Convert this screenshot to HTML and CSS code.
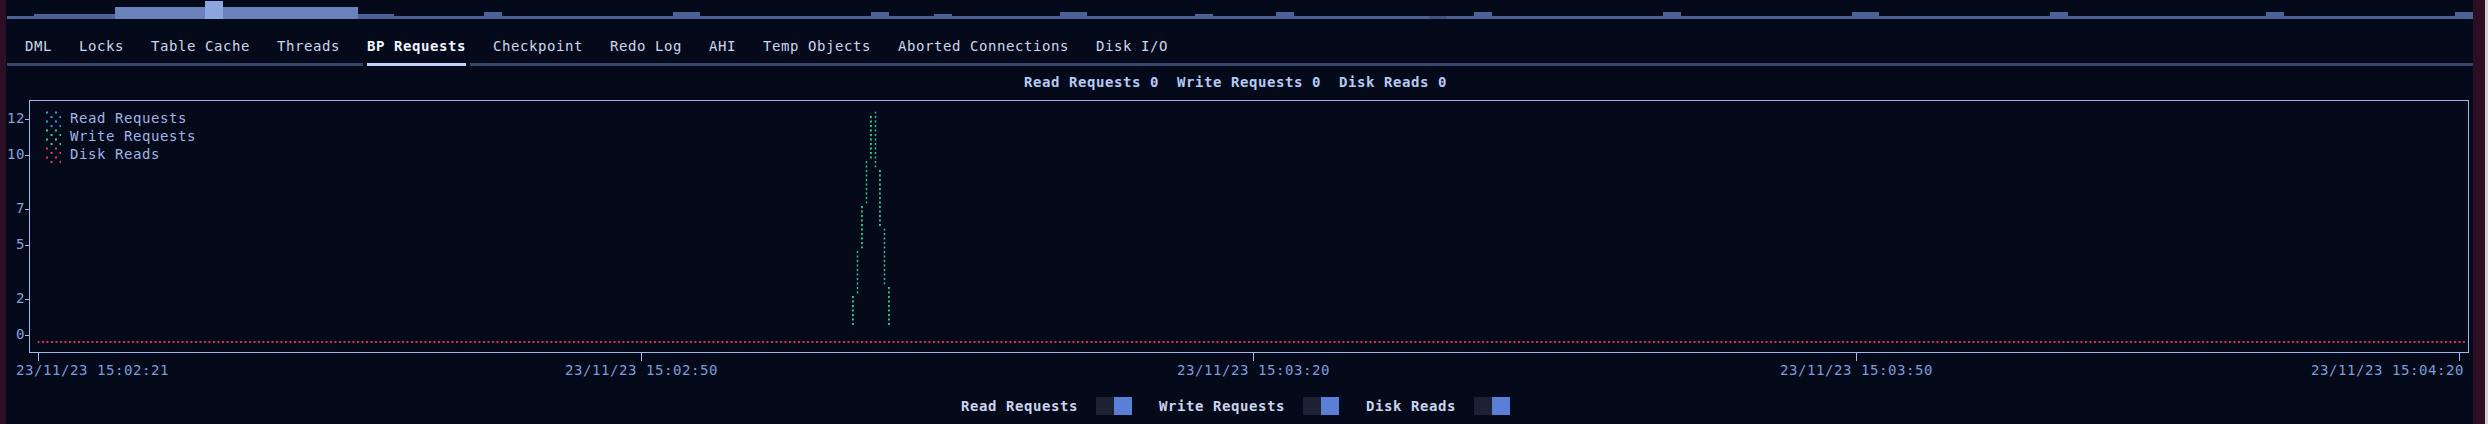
FILE: index.html
```html
<!DOCTYPE html>
<html lang="en">
<head>
<meta charset="utf-8">
<title>BP Requests</title>
<link rel="stylesheet" href="styles.css">
</head>
<body>
<div class="screen">
  <div class="edge-left"></div>
  <main class="app">
    <div class="spark">
      <span class="bar b1" style="width:27px;height:3px"></span>
      <span class="bar b1" style="width:81px;height:5px"></span>
      <span class="bar b2" style="width:90px;height:12px"></span>
      <span class="bar b3" style="width:18px;height:18px"></span>
      <span class="bar b2" style="width:135px;height:12px"></span>
      <span class="bar b1" style="width:36px;height:5px"></span>
      <span class="bar b1" style="width:90px;height:3px"></span>
      <span class="bar b1" style="width:18px;height:7px"></span>
      <span class="bar b1" style="width:171px;height:3px"></span>
      <span class="bar b1" style="width:27px;height:7px"></span>
      <span class="bar b1" style="width:171px;height:3px"></span>
      <span class="bar b1" style="width:18px;height:7px"></span>
      <span class="bar b1" style="width:45px;height:3px"></span>
      <span class="bar b1" style="width:18px;height:5px"></span>
      <span class="bar b1" style="width:108px;height:3px"></span>
      <span class="bar b1" style="width:27px;height:7px"></span>
      <span class="bar b1" style="width:108px;height:3px"></span>
      <span class="bar b1" style="width:18px;height:5px"></span>
      <span class="bar b1" style="width:63px;height:3px"></span>
      <span class="bar b1" style="width:18px;height:7px"></span>
      <span class="bar b1" style="width:135px;height:3px"></span>
      <span class="bar b0" style="width:18px;height:3px"></span>
      <span class="bar b1" style="width:27px;height:3px"></span>
      <span class="bar b1" style="width:18px;height:7px"></span>
      <span class="bar b1" style="width:171px;height:3px"></span>
      <span class="bar b1" style="width:18px;height:7px"></span>
      <span class="bar b1" style="width:171px;height:3px"></span>
      <span class="bar b1" style="width:27px;height:7px"></span>
      <span class="bar b1" style="width:171px;height:3px"></span>
      <span class="bar b1" style="width:18px;height:7px"></span>
      <span class="bar b1" style="width:198px;height:3px"></span>
      <span class="bar b1" style="width:18px;height:7px"></span>
      <span class="bar b1" style="width:171px;height:3px"></span>
      <span class="bar b1" style="width:18px;height:7px"></span>
    </div>
    <div class="blank"></div>
    <nav class="tabs">
      <span class="tab">DML</span>
      <span class="tab">Locks</span>
      <span class="tab">Table Cache</span>
      <span class="tab">Threads</span>
      <span class="tab active">BP Requests</span>
      <span class="tab">Checkpoint</span>
      <span class="tab">Redo Log</span>
      <span class="tab">AHI</span>
      <span class="tab">Temp Objects</span>
      <span class="tab">Aborted Connections</span>
      <span class="tab">Disk I/O</span>
    </nav>
    <div class="tab-rule">
      <span class="seg lead"></span>
      <span class="seg active"></span>
      <span class="seg rest"></span>
    </div>
    <div class="stats">
      <span>Read Requests 0</span>
      <span>Write Requests 0</span>
      <span>Disk Reads 0</span>
    </div>
    <section class="chart">
      <div class="yaxis">
        <div class="ylab" style="grid-row:2"><span>12</span><i class="ytick"></i></div>
        <div class="ylab" style="grid-row:4"><span>10</span><i class="ytick"></i></div>
        <div class="ylab" style="grid-row:7"><span>7</span><i class="ytick"></i></div>
        <div class="ylab" style="grid-row:9"><span>5</span><i class="ytick"></i></div>
        <div class="ylab" style="grid-row:12"><span>2</span><i class="ytick"></i></div>
        <div class="ylab" style="grid-row:14"><span>0</span><i class="ytick"></i></div>
      </div>
      <div class="plot-col">
        <div class="plot">
          <svg class="data" width="2438" height="251" viewBox="0 0 2438 251">
            <defs>
              <pattern id="dots-green" x="3" y="1.5" width="4.5" height="4.5" patternUnits="userSpaceOnUse">
                <rect width="2" height="2" fill="#2ad08e"/>
              </pattern>
              <pattern id="dots-red" x="3" y="1.5" width="4.5" height="4.5" patternUnits="userSpaceOnUse">
                <rect width="2" height="2" fill="#ee3358"/>
              </pattern>
            </defs>
            <rect x="7.5" y="240" width="2427.5" height="2" fill="url(#dots-red)"/>
            <rect x="822" y="195" width="2" height="29" fill="url(#dots-green)"/>
            <rect x="826.5" y="150" width="2" height="42.5" fill="url(#dots-green)"/>
            <rect x="831" y="105" width="2" height="42.5" fill="url(#dots-green)"/>
            <rect x="835.5" y="60" width="2" height="42.5" fill="url(#dots-green)"/>
            <rect x="840" y="15" width="2" height="42.5" fill="url(#dots-green)"/>
            <rect x="844.5" y="10.5" width="2" height="56" fill="url(#dots-green)"/>
            <rect x="849" y="69" width="2" height="56" fill="url(#dots-green)"/>
            <rect x="853.5" y="127.5" width="2" height="56" fill="url(#dots-green)"/>
            <rect x="858" y="186" width="2" height="38" fill="url(#dots-green)"/>
          </svg>
          <ul class="legend">
            <li>
              <svg class="mark read" width="18" height="18" viewBox="0 0 18 18">
                <rect x="3" y="2.5" width="2" height="2"/><rect x="12" y="2.5" width="2" height="2"/>
                <rect x="7.5" y="7" width="2" height="2"/><rect x="16.5" y="7" width="2" height="2"/>
                <rect x="3" y="11.5" width="2" height="2"/><rect x="12" y="11.5" width="2" height="2"/>
                <rect x="7.5" y="16" width="2" height="2"/><rect x="16.5" y="16" width="2" height="2"/>
              </svg>
              <span>Read Requests</span>
            </li>
            <li>
              <svg class="mark write" width="18" height="18" viewBox="0 0 18 18">
                <rect x="3" y="2.5" width="2" height="2"/><rect x="12" y="2.5" width="2" height="2"/>
                <rect x="7.5" y="7" width="2" height="2"/><rect x="16.5" y="7" width="2" height="2"/>
                <rect x="3" y="11.5" width="2" height="2"/><rect x="12" y="11.5" width="2" height="2"/>
                <rect x="7.5" y="16" width="2" height="2"/><rect x="16.5" y="16" width="2" height="2"/>
              </svg>
              <span>Write Requests</span>
            </li>
            <li>
              <svg class="mark disk" width="18" height="18" viewBox="0 0 18 18">
                <rect x="3" y="2.5" width="2" height="2"/><rect x="12" y="2.5" width="2" height="2"/>
                <rect x="7.5" y="7" width="2" height="2"/><rect x="16.5" y="7" width="2" height="2"/>
                <rect x="3" y="11.5" width="2" height="2"/><rect x="12" y="11.5" width="2" height="2"/>
                <rect x="7.5" y="16" width="2" height="2"/><rect x="16.5" y="16" width="2" height="2"/>
              </svg>
              <span>Disk Reads</span>
            </li>
          </ul>
        </div>
      </div>
    </section>
    <div class="xticks">
      <i class="xtick" style="grid-column:4"></i>
      <i class="xtick" style="grid-column:71"></i>
      <i class="xtick" style="grid-column:139"></i>
      <i class="xtick" style="grid-column:206"></i>
      <i class="xtick" style="grid-column:273"></i>
    </div>
    <div class="xaxis">
      <span style="grid-column:2 / span 17">23/11/23 15:02:21</span>
      <span style="grid-column:63 / span 17">23/11/23 15:02:50</span>
      <span style="grid-column:131 / span 17">23/11/23 15:03:20</span>
      <span style="grid-column:198 / span 17">23/11/23 15:03:50</span>
      <span style="grid-column:257 / span 17">23/11/23 15:04:20</span>
    </div>
    <div class="blank"></div>
    <div class="toggles">
      <div class="tog"><b>Read Requests</b><span class="switch"><i class="off"></i><i class="on"></i></span></div>
      <div class="tog"><b>Write Requests</b><span class="switch"><i class="off"></i><i class="on"></i></span></div>
      <div class="tog"><b>Disk Reads</b><span class="switch"><i class="off"></i><i class="on"></i></span></div>
    </div>
  </main>
  <div class="edge-right"></div>
  <div class="scroll"></div>
</div>
</body>
</html>
```
FILE: styles.css
```css
* {
  box-sizing: border-box;
  margin: 0;
  padding: 0;
}

html,
body {
  background: #050a1a;
}

body {
  width: 2488px;
  height: 424px;
  overflow: hidden;
  font-family: "DejaVu Sans Mono", "Liberation Mono", monospace;
  font-size: 14px;
  letter-spacing: 0.5713px;
  line-height: 18px;
  color: #c9d4ec;
}

.screen {
  display: flex;
  height: 424px;
}

.edge-left {
  flex: none;
  width: 6px;
  background: #2e0e24;
}

.app {
  flex: none;
  width: 2466px;
  margin-left: 1px;
  padding-top: 1px;
}

.edge-right {
  flex: none;
  width: 12px;
  background: #2e0e24;
}

.scroll {
  flex: 1;
  background: #d2d2d4;
}

/* sparkline */
.spark {
  display: flex;
  align-items: flex-end;
  height: 18px;
}

.bar {
  flex: none;
  display: block;
}

.b0 { background: #3e5384; }
.b1 { background: #4b6397; }
.b2 { background: #6a81ba; }
.b3 { background: #8ca5df; }

.blank {
  height: 18px;
}

/* tabs */
.tabs {
  display: flex;
  gap: 27px;
  height: 18px;
  padding-left: 18px;
  white-space: pre;
}

.tab {
  color: #ccd6ee;
}

.tab.active {
  color: #f0f4ff;
  font-weight: bold;
}

.tab-rule {
  display: flex;
  gap: 4px;
  height: 18px;
  padding-top: 8px;
}

.seg {
  height: 3px;
  background: #37476b;
}

.seg.lead {
  width: 356px;
}

.seg.active {
  width: 99px;
  background: #c3d1fb;
}

.seg.rest {
  flex: 1;
}

/* stats line */
.stats {
  display: flex;
  justify-content: center;
  gap: 18px;
  height: 18px;
  padding-right: 9px;
  color: #b5c9f2;
  font-weight: bold;
  white-space: pre;
}

/* chart */
.chart {
  display: flex;
  height: 262px;
}

.yaxis {
  flex: none;
  width: 22px;
  display: grid;
  grid-template-rows: repeat(14, 18px);
  color: #86a2dc;
}

.ylab {
  display: flex;
  align-items: flex-start;
}

.ylab span {
  width: 18px;
  text-align: right;
}

.ytick {
  display: block;
  width: 4px;
  height: 1px;
  margin-top: 10px;
  background: #a4b6ea;
}

.plot-col {
  flex: none;
  width: 2440px;
  padding-top: 9px;
}

.plot {
  position: relative;
  height: 253px;
  border: 1px solid #a4b6ea;
  padding: 8px 0 0 13px;
}

.data {
  position: absolute;
  left: 0;
  top: 0;
}

.legend {
  position: relative;
  list-style: none;
  color: #a0b3e5;
}

.legend li {
  display: flex;
  gap: 9px;
  height: 18px;
  white-space: pre;
}

.mark {
  flex: none;
  display: block;
}

.mark.read { fill: #319fe8; }
.mark.write { fill: #2ad38c; }
.mark.disk { fill: #ec3454; }

.xticks {
  display: grid;
  grid-template-columns: repeat(274, 9px);
  height: 8px;
}

.xtick {
  display: block;
  width: 1px;
  height: 8px;
  margin-left: 4px;
  background: #a4b6ea;
}

.xaxis {
  display: grid;
  grid-template-columns: repeat(274, 9px);
  height: 18px;
  color: #7e9bd8;
  white-space: pre;
}

/* bottom toggles */
.toggles {
  display: flex;
  justify-content: center;
  gap: 27px;
  height: 18px;
  padding-right: 9px;
}

.tog {
  display: flex;
  gap: 18px;
  color: #c9d4ee;
  white-space: pre;
}

.switch {
  display: flex;
}

.switch i {
  display: block;
  width: 18px;
  height: 18px;
}

.switch .off {
  background: #1c2234;
}

.switch .on {
  background: #5b7fd6;
}
```
